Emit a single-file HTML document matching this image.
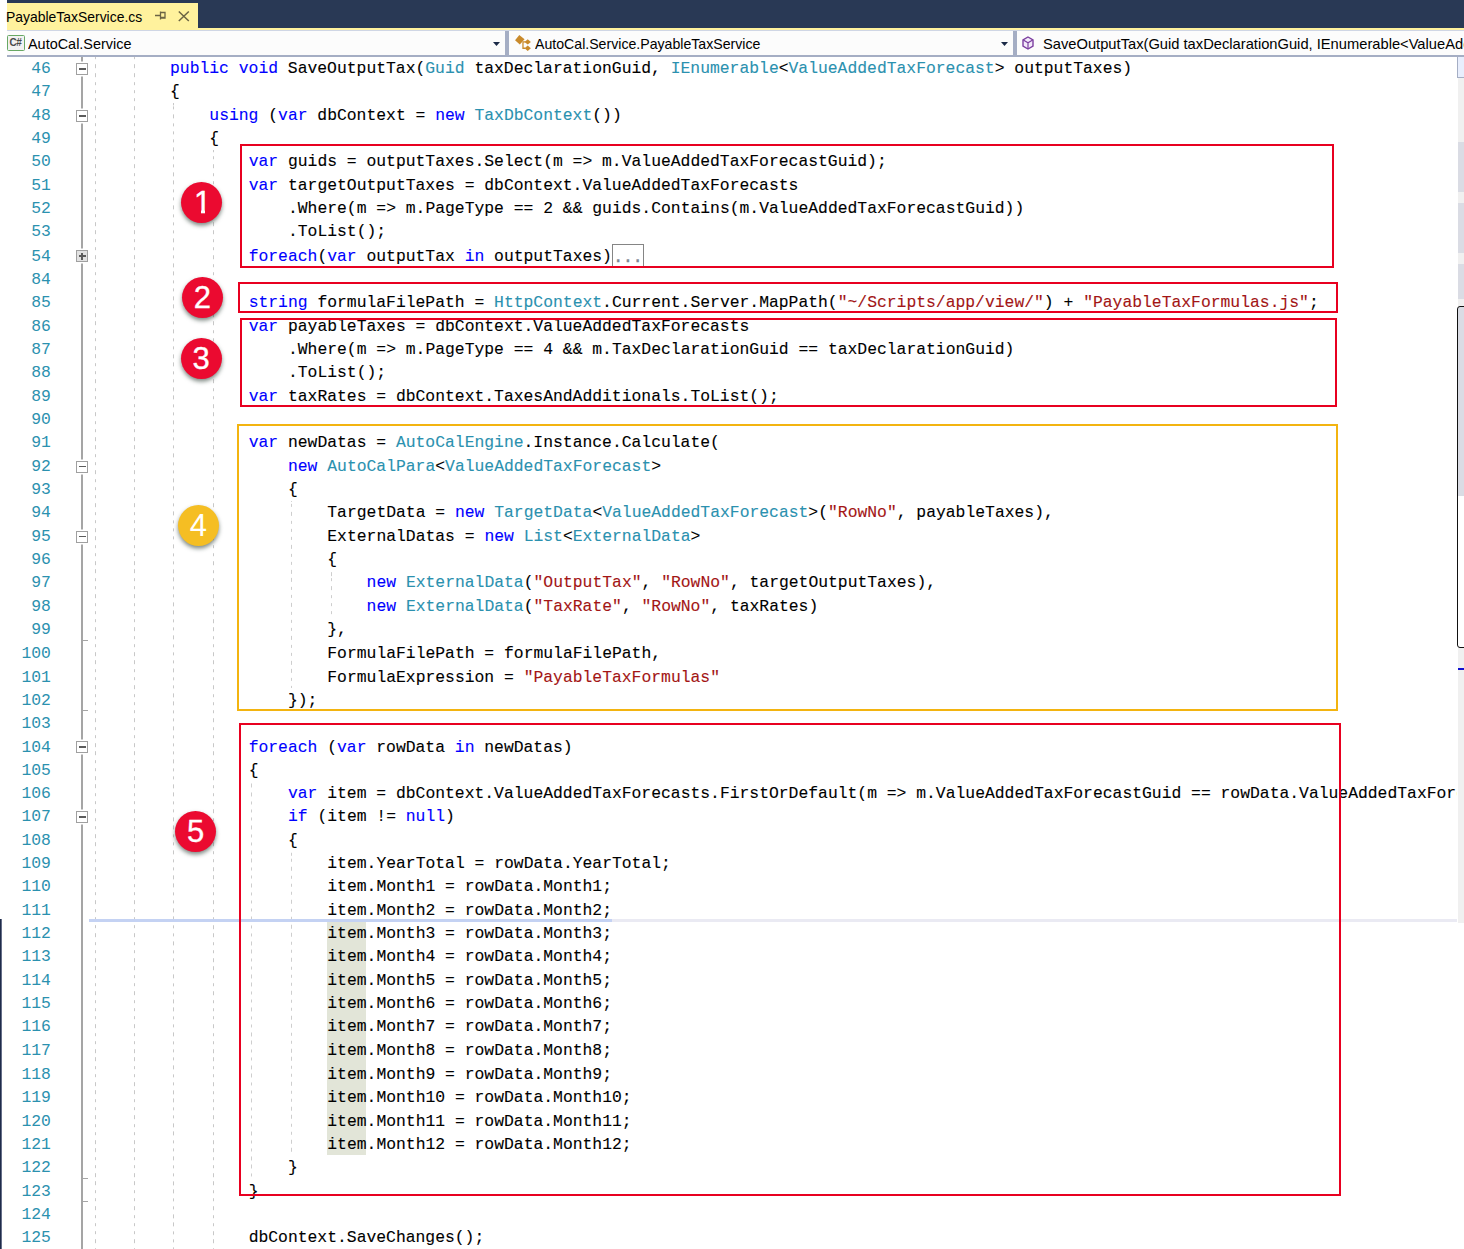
<!DOCTYPE html>
<html lang="en"><head><meta charset="utf-8"><title>PayableTaxService.cs</title>
<style>
html,body{margin:0;padding:0;background:#fff;}
body{width:1464px;height:1249px;position:relative;overflow:hidden;font-family:"Liberation Sans",sans-serif;}
.abs{position:absolute;}
#hdr{left:7px;top:0;width:1457px;height:28px;background:#293955;}
#tab{left:7px;top:3px;width:191px;height:26px;background:#fff29d;}
#yl{left:7px;top:28px;width:1457px;height:2px;background:#fff29d;}
#nav{left:7px;top:30px;width:1457px;background:#fcfcfc;border-top:1px solid #cfd6e5;border-bottom:2px solid #a5aec4;box-sizing:content-box;height:24px;}
.ui{position:absolute;transform-origin:0 0;font-family:"Liberation Sans",sans-serif;color:#000;white-space:pre;line-height:20px;height:20px;}
.sep{position:absolute;top:31px;height:24px;width:4px;background:#a5aec4;}
.code,.ln{position:absolute;font-family:"Liberation Mono","DejaVu Sans Mono",monospace;font-size:16.38px;line-height:24px;height:24px;white-space:pre;color:#000;margin:0;letter-spacing:-0.0006px;-webkit-text-stroke:0.100px;}
.ln{color:#2b91af;left:0;width:50.900px;-webkit-text-stroke:0;text-align:right;}
.k{color:#0000ff;} .t{color:#2b91af;} .s{color:#a31515;}
.hl{background:#e1e6d8;}
.dotsb{box-sizing:border-box;border:1px solid #858585;color:#7d8594;font-family:"Liberation Mono",monospace;font-size:16.380px;letter-spacing:0;line-height:26px;padding-left:0;-webkit-text-stroke:0.500px;white-space:pre;overflow:hidden;}
.g{position:absolute;width:1px;background:repeating-linear-gradient(to bottom,#c8c8c8 0,#c8c8c8 3.400px,transparent 3.400px,transparent 8.270px);}
.fl{position:absolute;background:#a5a5a5;}
.fb{position:absolute;width:12px;height:12px;box-sizing:border-box;border:1px solid #a0a0a0;background:#fff;box-shadow:0 0 0 1.500px #fff;}
.fb:before{content:"";position:absolute;left:1.500px;top:4.200px;width:7px;height:1.600px;background:#5c5c5c;}
.fb.plus{background:#e2e2e2;}
.fb.plus:after{content:"";position:absolute;left:4.200px;top:1.500px;width:1.600px;height:7px;background:#5c5c5c;}
.box{position:absolute;box-sizing:border-box;border:2px solid #e4002b;}
.cnum{position:absolute;width:41px;color:#fff;font-family:"Liberation Sans",sans-serif;font-size:31px;line-height:normal;text-align:center;}
.circ{position:absolute;width:41px;height:41px;border-radius:50%;background:#e81030;color:#fff;font-family:"Liberation Sans",sans-serif;font-size:31px;line-height:41px;text-align:center;box-shadow:0 2.500px 4px rgba(20,40,30,.55);}
</style></head><body>

<div class="abs" id="hdr"></div><div class="abs" id="tab"></div><div class="abs" id="yl"></div><div class="abs" id="nav"></div>
<div class="ui" id="tabtxt" style="left:6px;top:7px;font-size:15px;transform:scaleX(0.928)">PayableTaxService.cs</div>
<svg class="abs" style="left:150px;top:6px" width="50" height="20" viewBox="0 0 50 20"><g fill="none" stroke="#6b6444" stroke-width="1.3"><path d="M5 9.500h5.500M10.500 5.500v8M10.500 6.500h4.500v5.500h-4.500M10.500 11.300h4.500" /><path d="M28.800 5.500l10 9.500M38.800 5.500l-10 9.500" stroke-width="1.500"/></g></svg>
<div class="sep" style="left:505px"></div><div class="sep" style="left:1013px"></div>
<div class="ui" id="n1" style="left:27.500px;top:34px;font-size:15px;transform:scaleX(0.962)">AutoCal.Service</div>
<div class="ui" id="n2" style="left:534.500px;top:34px;font-size:15px;transform:scaleX(0.942)">AutoCal.Service.PayableTaxService</div>
<div class="ui" id="n3" style="left:1042.500px;top:34px;font-size:15px;transform:scaleX(0.980)">SaveOutputTax(Guid taxDeclarationGuid, IEnumerable&lt;ValueAddedTaxForecast&gt; outputTaxes)</div>
<div class="abs" style="left:7px;top:35px;width:18px;height:15.500px;box-sizing:border-box;border:1.600px solid #68a864;border-radius:1.500px;background:#f2f2f2;"><div style="position:absolute;left:0;top:1.100px;width:14.800px;height:11px;font-family:'Liberation Sans',sans-serif;font-weight:bold;font-size:10px;line-height:11px;color:#4a4a4a;text-align:center;letter-spacing:-0.500px;">C#</div></div>
<svg class="abs" style="left:493px;top:42px" width="8" height="5"><path d="M0 0h7l-3.500 4z" fill="#1b2a47"/></svg>
<svg class="abs" style="left:1001px;top:42px" width="8" height="5"><path d="M0 0h7l-3.500 4z" fill="#1b2a47"/></svg>
<svg class="abs" style="left:513.500px;top:33.600px" width="19" height="19" viewBox="0 0 18 18"><g fill="#c98a2b"><path d="M5 1l5 4-4.500 5L1 6z"/><path d="M13 5l3 2.500-3 2.500-3-2.500z"/><path d="M13 11l3 2.500-3 2.500-3-2.500z"/></g><path d="M8 7.500h3M8.500 8v5.500h2" fill="none" stroke="#c98a2b" stroke-width="1.200"/></svg>
<svg class="abs" style="left:1021px;top:36px" width="14" height="14" viewBox="0 0 14 14"><path d="M7 1l5 2.800v6.400L7 13 2 10.200V3.800z" fill="#f3eafa" stroke="#7c3fa0" stroke-width="1.400"/><path d="M2.300 4L7 6.700 11.700 4M7 6.700V12.500" fill="none" stroke="#7c3fa0" stroke-width="1.200"/></svg>
<div class="abs" style="left:1458px;top:57px;width:6px;height:866px;background:#f0f0f0"></div>
<div class="abs" style="left:1457px;top:57px;width:7px;height:21px;background:#e8eefd;border-left:1px solid #a5aec4;border-bottom:1px solid #a5aec4;box-sizing:border-box"></div>
<div class="abs" style="left:1458px;top:142px;width:6px;height:50px;background:#dadce4"></div>
<div class="abs" style="left:1458px;top:203px;width:6px;height:50px;background:#dadce4"></div>
<div class="abs" style="left:1458px;top:264px;width:6px;height:35px;background:#dadce4"></div>
<div class="abs" style="left:1458px;top:307px;width:6px;height:189px;background:#dadce4"></div>
<div class="abs" style="left:1458px;top:496px;width:6px;height:151px;background:#fff"></div>
<div class="abs" style="left:1457px;top:306px;width:12px;height:342px;border:1px solid #111;border-radius:3px;box-sizing:border-box"></div>
<div class="abs" style="left:1458px;top:668px;width:6px;height:2px;background:#1010d0"></div>
<div class="abs" style="left:0;top:919px;width:2px;height:330px;background:linear-gradient(to right,#1f2b4a 0,#1f2b4a 1px,#aab0c6 2px)"></div>
<div class="g" style="left:95px;top:57.0px;height:1192.0px;background-position:0 8.17px"></div>
<div class="g" style="left:134px;top:57.0px;height:1192.0px;background-position:0 8.17px"></div>
<div class="g" style="left:173px;top:103.2px;height:1145.8px;background-position:0 3.36px"></div>
<div class="g" style="left:213px;top:149.9px;height:1099.1px;background-position:0 6.22px"></div>
<div class="g" style="left:251px;top:781.2px;height:397.5px;background-position:0 3.48px;opacity:.9"></div>
<div class="g" style="left:291px;top:500.6px;height:187.0px;background-position:0 2.86px;opacity:.9"></div>
<div class="g" style="left:291px;top:851.3px;height:303.9px;background-position:0 7.77px;opacity:.9"></div>
<div class="g" style="left:331px;top:570.8px;height:46.8px;background-position:0 7.15px;opacity:.9"></div>
<div class="fl" style="left:81.300px;top:57px;width:1.600px;height:1192px"></div>
<div class="fb" style="left:76px;top:63.0px"></div>
<div class="fb" style="left:76px;top:109.8px"></div>
<div class="fb plus" style="left:76px;top:250.0px"></div>
<div class="fb" style="left:76px;top:460.5px"></div>
<div class="fb" style="left:76px;top:530.6px"></div>
<div class="fb" style="left:76px;top:741.0px"></div>
<div class="fb" style="left:76px;top:811.2px"></div>
<div class="fl" style="left:83px;top:639.9px;width:5px;height:1px"></div>
<div class="fl" style="left:83px;top:710.0px;width:5px;height:1px"></div>
<div class="fl" style="left:83px;top:1177.6px;width:5px;height:1px"></div>
<div class="fl" style="left:83px;top:1201.0px;width:5px;height:1px"></div>
<div class="abs" style="left:326.800px;top:919px;width:39.200px;height:236.300px;background:#e2e5d8"></div>
<div class="abs" style="left:612px;top:919px;width:845px;height:2.600px;background:#eaeaf3"></div>
<div class="abs" style="left:89px;top:919px;width:523px;height:2.600px;background:#c4d2f3"></div>
<div class="abs dotsb" style="left:612.200px;top:244px;width:31.600px;height:23px">...</div>
<div id="code" style="position:absolute;left:0;top:0;width:1457px;height:1178.30px;overflow:hidden;transform-origin:0 0;transform:scaleY(1.06)">
<div class="ln" style="top:53.09px">46</div>
<div class="code" style="left:170.03px;top:53.09px"><span class="k">public</span> <span class="k">void</span> SaveOutputTax(<span class="t">Guid</span> taxDeclarationGuid, <span class="t">IEnumerable</span>&lt;<span class="t">ValueAddedTaxForecast</span>&gt; outputTaxes)</div>
<div class="ln" style="top:75.15px">47</div>
<div class="code" style="left:170.03px;top:75.15px">{</div>
<div class="ln" style="top:97.21px">48</div>
<div class="code" style="left:209.35px;top:97.21px"><span class="k">using</span> (<span class="k">var</span> dbContext = <span class="k">new</span> <span class="t">TaxDbContext</span>())</div>
<div class="ln" style="top:119.26px">49</div>
<div class="code" style="left:209.35px;top:119.26px">{</div>
<div class="ln" style="top:141.32px">50</div>
<div class="code" style="left:248.66px;top:141.32px"><span class="k">var</span> guids = outputTaxes.Select(m =&gt; m.ValueAddedTaxForecastGuid);</div>
<div class="ln" style="top:163.38px">51</div>
<div class="code" style="left:248.66px;top:163.38px"><span class="k">var</span> targetOutputTaxes = dbContext.ValueAddedTaxForecasts</div>
<div class="ln" style="top:185.43px">52</div>
<div class="code" style="left:287.98px;top:185.43px">.Where(m =&gt; m.PageType == 2 &amp;&amp; guids.Contains(m.ValueAddedTaxForecastGuid))</div>
<div class="ln" style="top:207.49px">53</div>
<div class="code" style="left:287.98px;top:207.49px">.ToList();</div>
<div class="ln" style="top:229.55px">54</div>
<div class="code" style="left:248.66px;top:229.55px"><span class="k">foreach</span>(<span class="k">var</span> outputTax <span class="k">in</span> outputTaxes)</div>
<div class="ln" style="top:251.60px">84</div>
<div class="ln" style="top:273.66px">85</div>
<div class="code" style="left:248.66px;top:273.66px"><span class="k">string</span> formulaFilePath = <span class="t">HttpContext</span>.Current.Server.MapPath(<span class="s">"~/Scripts/app/view/"</span>) + <span class="s">"PayableTaxFormulas.js"</span>;</div>
<div class="ln" style="top:295.72px">86</div>
<div class="code" style="left:248.66px;top:295.72px"><span class="k">var</span> payableTaxes = dbContext.ValueAddedTaxForecasts</div>
<div class="ln" style="top:317.77px">87</div>
<div class="code" style="left:287.98px;top:317.77px">.Where(m =&gt; m.PageType == 4 &amp;&amp; m.TaxDeclarationGuid == taxDeclarationGuid)</div>
<div class="ln" style="top:339.83px">88</div>
<div class="code" style="left:287.98px;top:339.83px">.ToList();</div>
<div class="ln" style="top:361.89px">89</div>
<div class="code" style="left:248.66px;top:361.89px"><span class="k">var</span> taxRates = dbContext.TaxesAndAdditionals.ToList();</div>
<div class="ln" style="top:383.94px">90</div>
<div class="ln" style="top:406.00px">91</div>
<div class="code" style="left:248.66px;top:406.00px"><span class="k">var</span> newDatas = <span class="t">AutoCalEngine</span>.Instance.Calculate(</div>
<div class="ln" style="top:428.06px">92</div>
<div class="code" style="left:287.98px;top:428.06px"><span class="k">new</span> <span class="t">AutoCalPara</span>&lt;<span class="t">ValueAddedTaxForecast</span>&gt;</div>
<div class="ln" style="top:450.11px">93</div>
<div class="code" style="left:287.98px;top:450.11px">{</div>
<div class="ln" style="top:472.17px">94</div>
<div class="code" style="left:327.30px;top:472.17px">TargetData = <span class="k">new</span> <span class="t">TargetData</span>&lt;<span class="t">ValueAddedTaxForecast</span>&gt;(<span class="s">"RowNo"</span>, payableTaxes),</div>
<div class="ln" style="top:494.23px">95</div>
<div class="code" style="left:327.30px;top:494.23px">ExternalDatas = <span class="k">new</span> <span class="t">List</span>&lt;<span class="t">ExternalData</span>&gt;</div>
<div class="ln" style="top:516.28px">96</div>
<div class="code" style="left:327.30px;top:516.28px">{</div>
<div class="ln" style="top:538.34px">97</div>
<div class="code" style="left:366.61px;top:538.34px"><span class="k">new</span> <span class="t">ExternalData</span>(<span class="s">"OutputTax"</span>, <span class="s">"RowNo"</span>, targetOutputTaxes),</div>
<div class="ln" style="top:560.40px">98</div>
<div class="code" style="left:366.61px;top:560.40px"><span class="k">new</span> <span class="t">ExternalData</span>(<span class="s">"TaxRate"</span>, <span class="s">"RowNo"</span>, taxRates)</div>
<div class="ln" style="top:582.45px">99</div>
<div class="code" style="left:327.30px;top:582.45px">},</div>
<div class="ln" style="top:604.51px">100</div>
<div class="code" style="left:327.30px;top:604.51px">FormulaFilePath = formulaFilePath,</div>
<div class="ln" style="top:626.57px">101</div>
<div class="code" style="left:327.30px;top:626.57px">FormulaExpression = <span class="s">"PayableTaxFormulas"</span></div>
<div class="ln" style="top:648.62px">102</div>
<div class="code" style="left:287.98px;top:648.62px">});</div>
<div class="ln" style="top:670.68px">103</div>
<div class="ln" style="top:692.74px">104</div>
<div class="code" style="left:248.66px;top:692.74px"><span class="k">foreach</span> (<span class="k">var</span> rowData <span class="k">in</span> newDatas)</div>
<div class="ln" style="top:714.79px">105</div>
<div class="code" style="left:248.66px;top:714.79px">{</div>
<div class="ln" style="top:736.85px">106</div>
<div class="code" style="left:287.98px;top:736.85px"><span class="k">var</span> item = dbContext.ValueAddedTaxForecasts.FirstOrDefault(m =&gt; m.ValueAddedTaxForecastGuid == rowData.ValueAddedTaxForecastGuid);</div>
<div class="ln" style="top:758.91px">107</div>
<div class="code" style="left:287.98px;top:758.91px"><span class="k">if</span> (item != <span class="k">null</span>)</div>
<div class="ln" style="top:780.96px">108</div>
<div class="code" style="left:287.98px;top:780.96px">{</div>
<div class="ln" style="top:803.02px">109</div>
<div class="code" style="left:327.30px;top:803.02px">item.YearTotal = rowData.YearTotal;</div>
<div class="ln" style="top:825.08px">110</div>
<div class="code" style="left:327.30px;top:825.08px">item.Month1 = rowData.Month1;</div>
<div class="ln" style="top:847.13px">111</div>
<div class="code" style="left:327.30px;top:847.13px">item.Month2 = rowData.Month2;</div>
<div class="ln" style="top:869.19px">112</div>
<div class="code" style="left:327.30px;top:869.19px">item.Month3 = rowData.Month3;</div>
<div class="ln" style="top:891.25px">113</div>
<div class="code" style="left:327.30px;top:891.25px">item.Month4 = rowData.Month4;</div>
<div class="ln" style="top:913.30px">114</div>
<div class="code" style="left:327.30px;top:913.30px">item.Month5 = rowData.Month5;</div>
<div class="ln" style="top:935.36px">115</div>
<div class="code" style="left:327.30px;top:935.36px">item.Month6 = rowData.Month6;</div>
<div class="ln" style="top:957.42px">116</div>
<div class="code" style="left:327.30px;top:957.42px">item.Month7 = rowData.Month7;</div>
<div class="ln" style="top:979.47px">117</div>
<div class="code" style="left:327.30px;top:979.47px">item.Month8 = rowData.Month8;</div>
<div class="ln" style="top:1001.53px">118</div>
<div class="code" style="left:327.30px;top:1001.53px">item.Month9 = rowData.Month9;</div>
<div class="ln" style="top:1023.58px">119</div>
<div class="code" style="left:327.30px;top:1023.58px">item.Month10 = rowData.Month10;</div>
<div class="ln" style="top:1045.64px">120</div>
<div class="code" style="left:327.30px;top:1045.64px">item.Month11 = rowData.Month11;</div>
<div class="ln" style="top:1067.70px">121</div>
<div class="code" style="left:327.30px;top:1067.70px">item.Month12 = rowData.Month12;</div>
<div class="ln" style="top:1089.75px">122</div>
<div class="code" style="left:287.98px;top:1089.75px">}</div>
<div class="ln" style="top:1111.81px">123</div>
<div class="code" style="left:248.66px;top:1111.81px">}</div>
<div class="ln" style="top:1133.87px">124</div>
<div class="ln" style="top:1155.92px">125</div>
<div class="code" style="left:248.66px;top:1155.92px">dbContext.SaveChanges();</div>
</div>
<div class="abs" style="left:1457px;top:780px;width:7px;height:36px;background:#fff"></div>
<div class="abs" style="left:1458px;top:780px;width:6px;height:36px;background:#f0f0f0"></div>
<div class="box" style="left:240px;top:144px;width:1094px;height:124px;border-color:#e80020"></div>
<div class="box" style="left:238px;top:282px;width:1100px;height:31px;border-color:#e80020"></div>
<div class="box" style="left:240px;top:318px;width:1097px;height:89px;border-color:#e80020"></div>
<div class="box" style="left:237px;top:424px;width:1101px;height:287px;border-color:#f3b410"></div>
<div class="box" style="left:239px;top:723px;width:1102px;height:473px;border-color:#e80020"></div>
<div class="circ" style="left:181.0px;top:181.8px;background:#eb0a30"></div>
<div class="cnum" style="left:182.0px;top:185px;-webkit-text-stroke:0.350px #fff">1</div>
<div class="abs" style="left:195.38px;top:210.40px;width:5.60px;height:3.200px;background:#eb0a30"></div>
<div class="abs" style="left:205.03px;top:210.40px;width:6px;height:3.200px;background:#eb0a30"></div>
<div class="circ" style="left:181.8px;top:276.8px;background:#eb0a30"></div>
<div class="cnum" style="left:181.8px;top:280px;-webkit-text-stroke:0.350px #fff">2</div>
<div class="circ" style="left:180.7px;top:338.1px;background:#eb0a30"></div>
<div class="cnum" style="left:180.7px;top:341px;-webkit-text-stroke:0.350px #fff">3</div>
<div class="circ" style="left:177.9px;top:505.0px;background:#f5be23"></div>
<div class="cnum" style="left:177.9px;top:508px">4</div>
<div class="circ" style="left:175.0px;top:811.0px;background:#eb0a30"></div>
<div class="cnum" style="left:175.0px;top:814px;-webkit-text-stroke:0.350px #fff">5</div>
</body></html>
